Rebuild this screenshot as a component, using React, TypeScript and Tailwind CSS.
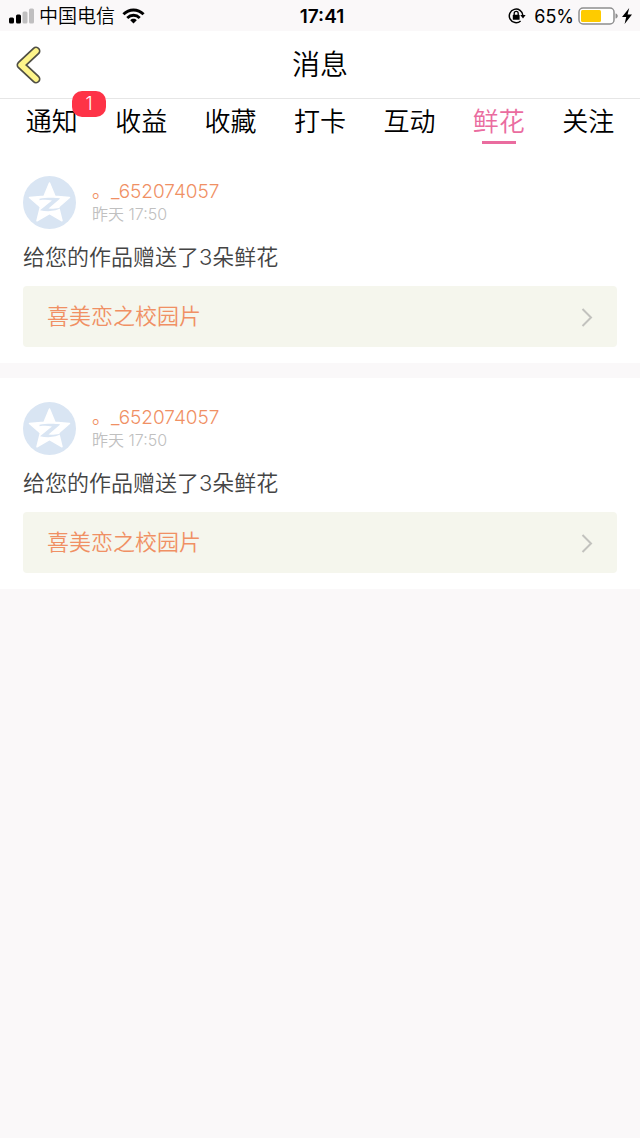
import React from "react";

const tabs = [
  { name: "通知", badge: 1 },
  { name: "收益" },
  { name: "收藏" },
  { name: "打卡" },
  { name: "互动" },
  { name: "鲜花", active: true },
  { name: "关注" },
];

const messages = [
  { id: 1, user: "。_652074057", time: "昨天 17:50", text: "给您的作品赠送了3朵鲜花", work: "喜美恋之校园片" },
  { id: 2, user: "。_652074057", time: "昨天 17:50", text: "给您的作品赠送了3朵鲜花", work: "喜美恋之校园片" },
];

function StatusBar() {
  return (
    <div className="grid h-[31px] grid-cols-[1fr_auto_1fr] items-center bg-[#faf8f9] px-2 text-lg text-black">
      <div className="flex items-center gap-[5px]">
        <svg width="26" height="16" viewBox="0 0 26 16">
          <rect x="1" y="9.500" width="5" height="6" rx="1.500" fill="#000" />
          <rect x="8" y="6.500" width="5" height="9" rx="1.500" fill="#000" />
          <rect x="14.500" y="3.500" width="5" height="12" rx="1.500" fill="#c0bfc0" />
          <rect x="21" y="0.500" width="5" height="15" rx="1.500" fill="#c0bfc0" />
        </svg>
        <span className="pt-0.5 text-[19px] leading-6 font-[350]">中国电信</span>
        <svg className="ml-0.5" width="23" height="16" viewBox="0 0 24 16" fill="none" stroke="#000" strokeWidth="3">
          <path d="M1.500 6.200C7.500 .2 16.500 .2 22.500 6.200" />
          <path d="M5.500 10C9.300 6.300 14.700 6.300 18.500 10" />
          <path d="M8.600 12.400C10.500 10.500 13.500 10.500 15.400 12.400L12 15.800Z" fill="#000" stroke="none" />
        </svg>
      </div>
      <span className="pt-0.5 pl-1 text-[19px] leading-6 font-semibold">17:41</span>
      <div className="flex items-center justify-end">
        <svg width="18" height="18" viewBox="0 0 18 18" fill="none" stroke="#000" strokeWidth="1.500">
          <path d="M12.600 14A6.800 6.800 0 1 1 14.900 8.500" />
          <path d="M12.300 8H17.600L15 11.400Z" fill="#000" stroke="none" />
          <rect x="4.800" y="7.800" width="6.800" height="5" rx=".6" fill="#000" stroke="none" />
          <path d="M6.200 8V6.400a2 2 0 0 1 4 0V8" strokeWidth="1.300" />
        </svg>
        <span className="ml-2 pt-0.5 leading-6">65%</span>
        <svg className="ml-1" width="42" height="18" viewBox="0 0 42 18">
          <rect x="1" y="1" width="35" height="16" rx="4" fill="#fff" stroke="#8e8e8f" strokeWidth="1.500" />
          <rect x="3" y="3" width="20" height="12" rx="1.500" fill="#fecb00" />
          <path d="M37.500 6.500C40.500 7 40.500 11 37.500 11.500Z" fill="#8e8e8f" />
        </svg>
        <svg className="ml-0.5" width="10" height="16" viewBox="0 0 10 16">
          <path d="M7.200 0L0 9H4.200L2.600 16L10 6.500H5.600Z" fill="#000" />
        </svg>
      </div>
    </div>
  );
}

function Header() {
  return (
    <header className="grid h-17 grid-cols-[1fr_auto_1fr] items-center border-b border-[#e6e6e6] px-4">
      <button type="button" aria-label="返回" className="justify-self-start">
        <svg width="25" height="38" viewBox="0 0 25 38" fill="none" strokeLinecap="round" strokeLinejoin="round">
          <path d="M20 5L5 19L20 33" stroke="#504f45" strokeWidth="9" />
          <path d="M20 5L5 19L20 33" stroke="#fdf48a" strokeWidth="5.500" />
        </svg>
      </button>
      <h1 className="text-[28px] leading-8 font-[350]">消息</h1>
    </header>
  );
}

function Tabs() {
  return (
    <nav className="flex h-[53px] px-[7px] font-[350]">
      {tabs.map((tab) => (
        <a
          key={tab.name}
          href="#"
          className={`relative flex flex-1 flex-col items-center pt-1 text-[26px] leading-[38px] ${tab.active ? "text-[#ea6c9f]" : "text-black"}`}
        >
          {tab.name}
          {tab.active && <span className="h-[3px] w-[34px] bg-[#ea6c9f]" />}
          {tab.badge && (
            <span className="absolute -top-2 left-[65px] flex h-[26px] w-[34px] items-center justify-center rounded-[10px] bg-[#fe3347] text-lg text-white">
              {tab.badge}
            </span>
          )}
        </a>
      ))}
    </nav>
  );
}

function Avatar() {
  return (
    <svg width="53" height="53" viewBox="0 0 53 53">
      <circle cx="26.500" cy="26.500" r="26.500" fill="#d9e5f3" />
      <path
        d="M26.500 7L32 20.300L46.500 21.500L35.600 31L39 44.800L26.500 37.600L14 44.800L17.400 31L6.500 21.500L21 20.300Z"
        fill="#fff"
        stroke="#fff"
        strokeWidth="1.500"
        strokeLinejoin="round"
      />
      <path d="M16.500 22.800C22 21.600 31 21.400 37.200 22.400L25.500 32.400C30 33 34 32.800 39 31.600C33 35.600 24 35.800 17 34.200L29 24.400C24.500 23.600 20.500 23.600 16.500 24.200Z" fill="#d9e5f3" />
    </svg>
  );
}

function MessageCard({ message }: { message: (typeof messages)[number] }) {
  return (
    <article className="px-[23px] pb-4 font-[350]">
      <div className="flex gap-4">
        <Avatar />
        <div className="flex flex-col pt-1">
          <span className="text-[19px] leading-6 text-[#f09064]">{message.user}</span>
          <span className="text-[16px] leading-5 text-[#c0c0c0]">{message.time}</span>
        </div>
      </div>
      <p className="mt-[14px] text-[22px] leading-7 text-[#444444]">{message.text}</p>
      <a href="#" className="mt-[15px] flex h-[61px] items-center justify-between rounded-[4px] bg-[#f5f6ed] px-6 text-[22px] text-[#f09064]">
        {message.work}
        <svg width="12" height="20" viewBox="0 0 12 20" fill="none" stroke="#c2c2be" strokeWidth="2">
          <path d="M1.500 2L10 10.500L1.500 19" />
        </svg>
      </a>
    </article>
  );
}

export default function App() {
  return (
    <div className="min-h-screen bg-[#faf8f9] font-[Inter,'Noto_Sans_CJK_SC',sans-serif]">
      <StatusBar />
      <div className="bg-white pb-6">
        <Header />
        <Tabs />
      </div>
      <main className="flex flex-col gap-[15px]">
        {messages.map((message, i) => (
          <div key={message.id} className={i > 0 ? "bg-white pt-6" : "bg-white"}>
            <MessageCard message={message} />
          </div>
        ))}
      </main>
    </div>
  );
}
